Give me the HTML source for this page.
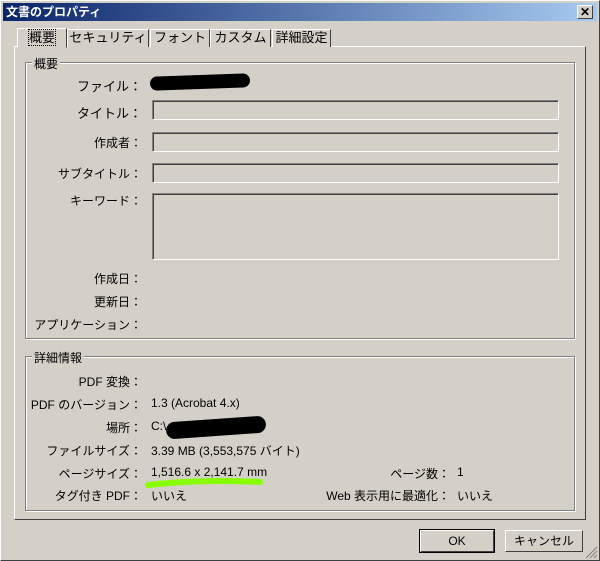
<!DOCTYPE html><html><head><meta charset="utf-8"><style>
*{margin:0;padding:0;box-sizing:border-box}
body{width:600px;height:561px;background:#d4d0c8;font-family:"Liberation Sans","Noto Sans CJK JP",sans-serif;font-size:12px;color:#000;position:relative;overflow:hidden}
.win{position:absolute;left:0;top:0;width:600px;height:561px;border:1px solid #fff;border-right-color:#404040;border-bottom-color:#404040}
.title{position:absolute;left:3px;top:3px;width:594px;height:18px;background:linear-gradient(90deg,#0a246a,#a6caf0);color:#fff;font-weight:bold;font-size:12px;line-height:18px;padding-left:3px}
.close{position:absolute;right:4px;top:2px;width:16px;height:14px;background:#d4d0c8;border:1px solid #fff;border-right-color:#404040;border-bottom-color:#404040;color:#000;font-size:12px;line-height:12px;text-align:center;font-weight:bold}
.a{position:absolute;white-space:nowrap}
.tab{position:absolute;top:29px;height:18px;border:1px solid #fff;border-bottom:none;border-right-color:#404040;line-height:16px;font-size:13px;padding:0;text-align:center;white-space:nowrap;background:#d4d0c8}
.panel{position:absolute;left:14px;top:46px;width:572px;height:474px;border:1px solid #fff;border-right-color:#404040;border-bottom-color:#404040}
.grp{position:absolute;border:1px solid #808080;box-shadow:1px 1px 0 #fff inset,1px 1px 0 #fff}
.gl{position:absolute;top:-8px;left:6px;background:#d4d0c8;padding:0 2px;font-size:12px}
.lb{position:absolute;text-align:right;width:200px;white-space:nowrap}
.fld{position:absolute;left:152px;width:407px;height:20px;border:1px solid #808080;border-right-color:#fff;border-bottom-color:#fff;box-shadow:inset 1px 1px 0 #404040}
.btn{position:absolute;top:530px;height:22px;border:1px solid #fff;border-right-color:#404040;border-bottom-color:#404040;text-align:center;line-height:20px}
.blot{position:absolute;background:#000;border-radius:10px}
</style></head><body><div class="win"></div>
<div class="title">文書のプロパティ<div class="close">✕</div></div>
<div class="panel"></div>
<div class="tab" style="left:17px;top:28px;height:20px;width:50px;z-index:2;border-bottom:1px solid #d4d0c8;line-height:18px"><span style="outline:1px dotted #000">概要</span></div>
<div class="tab" style="left:67px;width:82px">セキュリティ</div>
<div class="tab" style="left:150px;width:60px">フォント</div>
<div class="tab" style="left:210px;width:61px">カスタム</div>
<div class="tab" style="left:272px;width:59px">詳細設定</div>
<div class="grp" style="left:25px;top:62px;width:550px;height:277px"><div class="gl">概要</div></div>
<div class="lb" style="left:-58px;top:76px;font-size:13px">ファイル：</div>
<div class="blot" style="left:150px;top:75px;width:100px;height:14px;transform:rotate(-2deg)"></div>
<div class="lb" style="left:-58px;top:103px;font-size:13px">タイトル：</div><div class="fld" style="top:100px"></div>
<div class="lb" style="left:-58px;top:134px">作成者：</div><div class="fld" style="top:132px"></div>
<div class="lb" style="left:-58px;top:165px">サブタイトル：</div><div class="fld" style="top:163px"></div>
<div class="lb" style="left:-58px;top:192px">キーワード：</div><div class="fld" style="top:193px;height:67px"></div>
<div class="lb" style="left:-58px;top:270px">作成日：</div>
<div class="lb" style="left:-58px;top:293px">更新日：</div>
<div class="lb" style="left:-58px;top:316px">アプリケーション：</div>
<div class="grp" style="left:25px;top:356px;width:550px;height:155px"><div class="gl">詳細情報</div></div>
<div class="lb" style="left:-58px;top:373px">PDF 変換：</div>
<div class="lb" style="left:-58px;top:396px">PDF のバージョン：</div><div class="a" style="left:151px;top:396px">1.3 (Acrobat 4.x)</div>
<div class="lb" style="left:-58px;top:419px">場所：</div><div class="a" style="left:151px;top:419px">C:\</div>
<div class="blot" style="left:166px;top:419px;width:100px;height:17px;transform:rotate(-4deg)"></div>
<div class="lb" style="left:-58px;top:442px">ファイルサイズ：</div><div class="a" style="left:151px;top:442px">3.39 MB (3,553,575 バイト)</div>
<div class="lb" style="left:-58px;top:465px">ページサイズ：</div><div class="a" style="left:151px;top:465px">1,516.6 x 2,141.7 mm</div>
<svg class="a" style="left:140px;top:476px" width="130" height="20"><path d="M8 9 Q60 3 120 6" stroke="#88ff00" stroke-width="6" fill="none" stroke-linecap="round"/></svg>
<div class="lb" style="left:-58px;top:487px">タグ付き PDF：</div><div class="a" style="left:151px;top:487px">いいえ</div>
<div class="lb" style="left:250px;top:465px">ページ数：</div><div class="a" style="left:457px;top:465px">1</div>
<div class="lb" style="left:250px;top:487px">Web 表示用に最適化：</div><div class="a" style="left:457px;top:487px">いいえ</div>
<div class="btn" style="left:420px;width:74px;outline:1px solid #000">OK</div>
<div class="btn" style="left:505px;width:78px">キャンセル</div>
<svg class="a" style="left:585px;top:546px" width="13" height="13"><path d="M12 1L1 12M12 5L5 12M12 9L9 12" stroke="#808080"/></svg>
</body></html>
